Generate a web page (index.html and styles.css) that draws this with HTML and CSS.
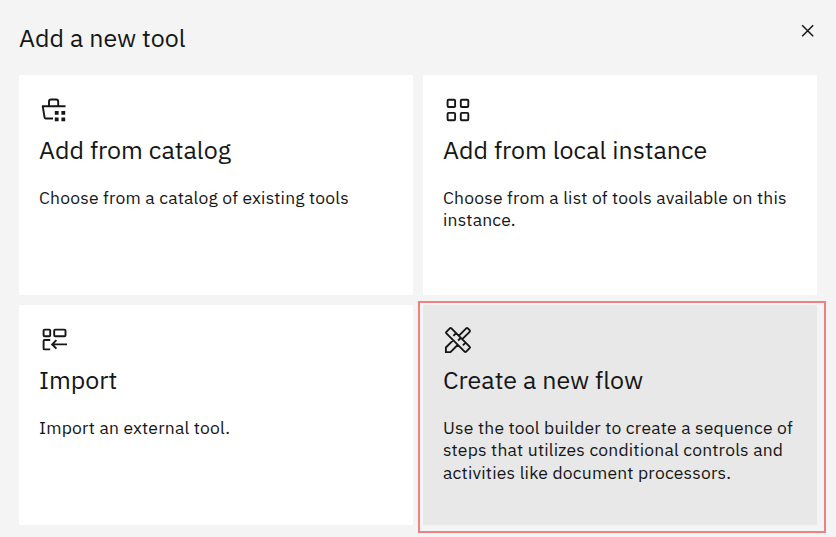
FILE: index.html
```html
<!DOCTYPE html>
<html lang="en">
<head>
<meta charset="utf-8">
<title>Add a new tool</title>
<link rel="stylesheet" href="styles.css">
</head>
<body>
<main class="dialog">
  <header class="header">
    <h1 class="title">Add a new tool</h1>
    <button class="close" aria-label="Close"><svg width="14" height="14" viewBox="0 0 14 14"><path d="M1.2 1.2l11 11M12.2 1.2l-11 11"/></svg></button>
  </header>
  <div class="grid">
    <section class="card">
      <svg class="icon" viewBox="0 0 30 30"><path d="M10 11V6.5Q10 4.5 12 4.5H17.2Q19.2 4.5 19.2 6.5V11M3 11.2H26.5M3.7 11.2L5.6 22.5Q5.8 23.5 6.8 23.5H14"/><path class="solid" d="M15.8 16h3.8v3.8h-3.8zM22.4 16h3.8v3.8h-3.8zM15.8 22.4h3.8v3.8h-3.8zM22.4 22.4h3.8v3.8h-3.8z"/></svg>
      <h2 class="name">Add from catalog</h2>
      <p class="text">Choose from a catalog of existing tools</p>
    </section>
    <section class="card">
      <svg class="icon" viewBox="0 0 30 30"><rect x="4.6" y="4.7" width="7.5" height="7.3" rx="1"/><rect x="17.8" y="4.7" width="7.5" height="7.3" rx="1"/><rect x="4.6" y="17.9" width="7.5" height="7.3" rx="1"/><rect x="17.8" y="17.9" width="7.5" height="7.3" rx="1"/></svg>
      <h2 class="name">Add from local instance</h2>
      <p class="text">Choose from a list of tools available on this<br>instance.</p>
    </section>
    <section class="card">
      <svg class="icon" viewBox="0 0 30 30"><rect x="4.6" y="4.6" width="6.6" height="6.6" rx="1"/><rect x="15.2" y="4.6" width="11.3" height="6.6" rx="1"/><path d="M11.2 15H5.6Q4.6 15 4.6 16V23.4Q4.6 24.4 5.6 24.4H11.2M28 19.4H13.4M17.4 15.2L13.2 19.4l4.2 4.2"/></svg>
      <h2 class="name">Import</h2>
      <p class="text">Import an external tool.</p>
    </section>
    <section class="card selected">
      <svg class="icon" viewBox="0 0 30 30"><path d="M8.4 3.4Q7.6 2.6 6.8 3.4L3.4 6.8Q2.6 7.6 3.4 8.4L21.6 26.6Q22.4 27.4 23.2 26.6L26.6 23.2Q27.4 22.4 26.6 21.6zM13.1 8.1L10.4 10.8M17.8 12.8L15.1 15.5M22.6 17.6L19.9 20.3M16 10.6L23.2 3.4Q24 2.6 24.8 3.4L26.6 5.2Q27.4 6 26.6 6.8L19.5 13.9M10 15.4L2.9 22.5V27.1H7.5L14.6 20"/></svg>
      <h2 class="name">Create a new flow</h2>
      <p class="text">Use the tool builder to create a sequence of<br>steps that utilizes conditional controls and<br>activities like document processors.</p>
    </section>
  </div>
</main>
</body>
</html>
```
FILE: styles.css
```css
* { box-sizing: border-box; }
body { margin: 0; background: #f4f4f4; color: #161616; font-family: "IBM Plex Sans", "Noto Sans", sans-serif; }
.dialog { height: 537px; padding: 0 19px; overflow: hidden; }
.header { display: flex; justify-content: space-between; height: 75px; }
.title, .name { margin: 0; font-size: 25px; font-weight: 400; line-height: 32px; white-space: nowrap; }
.title { padding-top: 22px; }
.close { width: 14px; height: 14px; margin: 24px 2px 0 0; padding: 0; border: 0; background: none; }
svg { display: block; fill: none; stroke: #161616; stroke-width: 1.9; }
.close svg { stroke-width: 1.5; }
.icon { width: 30px; height: 30px; }
.solid { fill: #161616; stroke: none; }
.grid { display: grid; grid-template-columns: 394px 394px; grid-template-rows: 220px 220px; gap: 10px; }
.card { padding: 20px; background: #fff; }
.selected { position: relative; background: #e8e8e8; }
.selected::after { content: ""; position: absolute; inset: -4px -9px -8px -5px; border: 2px solid #ee8282; }
.name { margin-top: 9px; }
.text { margin: 20.6px 0 0; font-size: 17.5px; line-height: 22.5px; letter-spacing: 0.2px; white-space: nowrap; }
```
